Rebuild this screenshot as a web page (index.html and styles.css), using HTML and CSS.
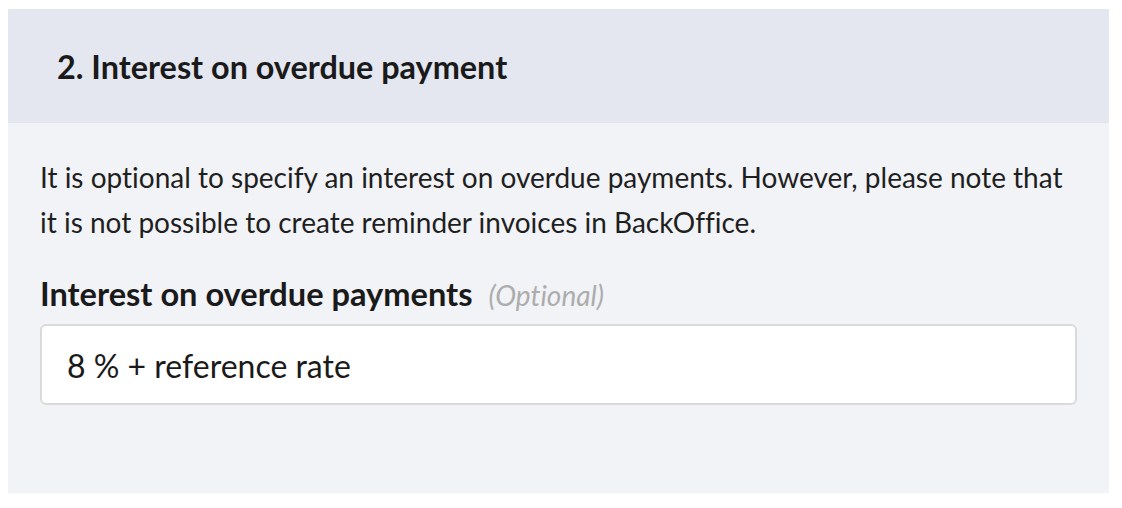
FILE: index.html
```html
<!DOCTYPE html>
<html lang="en">
<head>
    <meta charset="UTF-8">
    <meta name="viewport" content="width=device-width, initial-scale=1.0">
    <title>Interest on overdue payment</title>
    <link rel="stylesheet" href="styles.css">
</head>
<body>
    <div class="section-card">
        <div class="section-header">
            <h2>2. Interest on overdue payment</h2>
        </div>
        <div class="section-body">
            <p class="intro">It is optional to specify an interest on overdue payments. However, please note that it is not possible to create reminder invoices in BackOffice.</p>
            <label for="interest">Interest on overdue payments <span class="optional">(Optional)</span></label>
            <input type="text" id="interest" name="interest" value="8 % + reference rate">
        </div>
    </div>
</body>
</html>
```

FILE: styles.css
```css
* {
    box-sizing: border-box;
    margin: 0;
    padding: 0;
}

body {
    font-family: Lato, "Open Sans", sans-serif;
    font-variant-ligatures: no-common-ligatures;
    background-color: #ffffff;
    color: #1a1a1a;
    padding: 9px 13px 0 8px;
}

.section-card {
    background-color: #f2f3f7;
    height: 484px;
}

.section-header {
    background-color: #e4e7f0;
    height: 114px;
    display: flex;
    align-items: center;
    padding-left: 49px;
}

.section-header h2 {
    font-size: 32.4px;
    font-weight: 700;
    color: #1a1a1a;
}

.section-body {
    padding: 32px 32px 0 32px;
    display: flex;
    flex-direction: column;
}

.intro {
    font-size: 28px;
    line-height: 45px;
    color: #1f1f1f;
    margin-bottom: 29px;
}

label {
    font-size: 32.6px;
    font-weight: 700;
    color: #1a1a1a;
    margin-bottom: 11px;
}

.optional {
    font-size: 28px;
    font-weight: 400;
    font-style: italic;
    color: #adadad;
    margin-left: 8px;
}

input {
    height: 81px;
    padding: 2px 25px 0 25px;
    border: 2px solid #dadada;
    border-radius: 6px;
    background-color: #ffffff;
    font-family: inherit;
    font-size: 32px;
    color: #1a1a1a;
}
```
